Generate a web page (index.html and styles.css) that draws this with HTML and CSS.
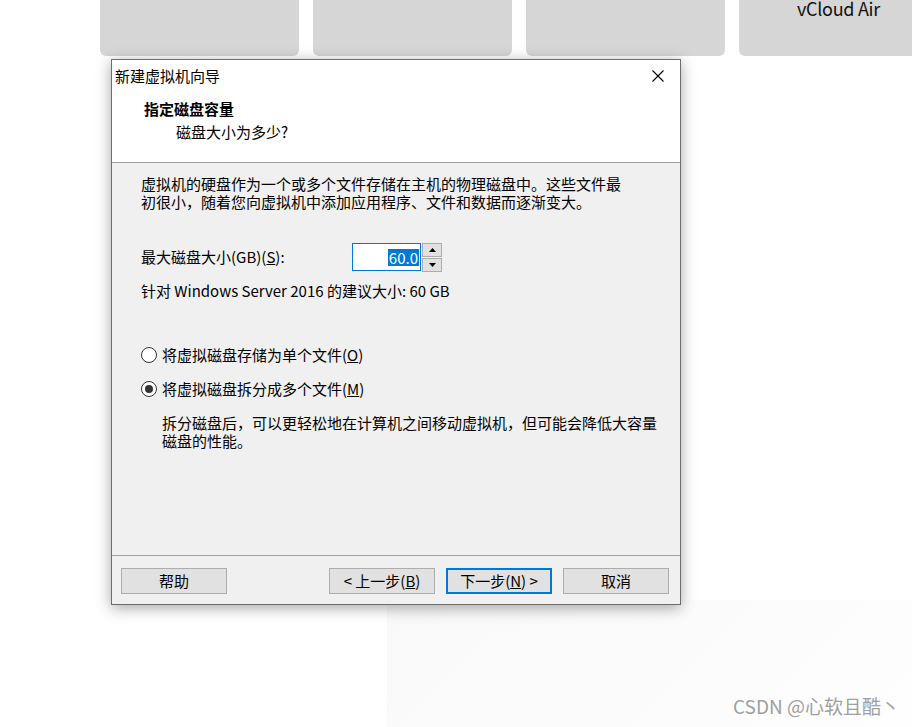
FILE: index.html
```html
<!DOCTYPE html>
<html lang="zh-CN">
<head>
    <meta charset="UTF-8">
    <meta name="viewport" content="width=device-width, initial-scale=1.0">
    <title>新建虚拟机向导</title>
    <link rel="stylesheet" href="styles.css">
</head>
<body>
    <div class="tiles">
        <div class="tile"></div>
        <div class="tile"></div>
        <div class="tile"></div>
        <div class="tile"><span class="tile-label">vCloud Air</span></div>
    </div>

    <div class="dialog">
        <div class="titlebar">
            <span class="title">新建虚拟机向导</span>
            <svg class="close" width="12" height="12" viewBox="0 0 12 12">
                <path d="M0.5 0.5 L11.5 11.5 M11.5 0.5 L0.5 11.5" stroke="#000" stroke-width="1.1" fill="none"/>
            </svg>
        </div>
        <div class="header">
            <div class="heading">指定磁盘容量</div>
            <div class="subheading">磁盘大小为多少?</div>
        </div>
        <div class="content">
            <p class="intro">虚拟机的硬盘作为一个或多个文件存储在主机的物理磁盘中。这些文件最<br>初很小，随着您向虚拟机中添加应用程序、文件和数据而逐渐变大。</p>

            <div class="size-row">
                <label class="size-label">最大磁盘大小(GB)(<u>S</u>):</label>
                <div class="spin">
                    <div class="spin-input"><span class="selected">60.0</span></div>
                    <div class="spin-buttons">
                        <div class="spin-btn">
                            <svg width="7" height="4" viewBox="0 0 7 4"><path d="M3.5 0 L7 4 L0 4 Z" fill="#000"/></svg>
                        </div>
                        <div class="spin-btn">
                            <svg width="7" height="4" viewBox="0 0 7 4"><path d="M0 0 L7 0 L3.5 4 Z" fill="#000"/></svg>
                        </div>
                    </div>
                </div>
            </div>

            <p class="hint">针对 Windows Server 2016 的建议大小: 60 GB</p>

            <div class="options">
                <label class="option"><span class="radio"></span>将虚拟磁盘存储为单个文件(<u>O</u>)</label>
                <label class="option"><span class="radio checked"></span>将虚拟磁盘拆分成多个文件(<u>M</u>)</label>
                <p class="option-desc">拆分磁盘后，可以更轻松地在计算机之间移动虚拟机，但可能会降低大容量<br>磁盘的性能。</p>
            </div>
        </div>
        <div class="footer">
            <button type="button" class="btn">帮助</button>
            <div class="nav">
                <button type="button" class="btn">&lt; 上一步(<u>B</u>)</button>
                <button type="button" class="btn default">下一步(<u>N</u>) &gt;</button>
                <button type="button" class="btn">取消</button>
            </div>
        </div>
    </div>

    <div class="watermark">CSDN @心软且酷丶</div>
</body>
</html>
```

FILE: styles.css
```css
body {
    margin: 0;
    width: 912px;
    height: 727px;
    overflow: hidden;
    position: relative;
    font-family: "Noto Sans CJK SC", "Noto Sans", sans-serif;
    font-size: 15px;
    color: #000;
    background-color: #fff;
    background-image: linear-gradient(135deg, #f9f9f9, #fcfcfc 60%, #fefefe);
    background-repeat: no-repeat;
    background-position: 387px 600px;
    background-size: 525px 127px;
}

.tiles {
    display: flex;
    gap: 14px;
    padding-left: 100px;
}

.tile {
    flex: 0 0 199px;
    height: 56px;
    background-color: #d6d6d6;
    border-radius: 0 0 6px 6px;
    text-align: center;
}

.tile-label {
    display: block;
    margin-top: -5px;
    font-size: 18px;
    letter-spacing: -0.3px;
    color: #111;
}

.dialog {
    position: absolute;
    left: 111px;
    top: 59px;
    width: 568px;
    height: 544px;
    border: 1px solid #6d6d6d;
    background-color: #f0f0f0;
    box-shadow: 0 3px 14px rgba(0, 0, 0, 0.35);
    display: flex;
    flex-direction: column;
}

.titlebar {
    height: 32px;
    background-color: #fff;
    display: flex;
    align-items: center;
    justify-content: space-between;
    padding: 0 16px 0 3px;
}

.title {
    line-height: 18px;
}

.header {
    background-color: #fff;
    height: 70px;
    border-bottom: 1px solid #a0a0a0;
    padding-left: 32px;
    line-height: 18px;
}

.heading {
    font-weight: bold;
    padding-top: 8px;
}

.subheading {
    padding-left: 32px;
    margin-top: 5px;
}

.content {
    flex: 1;
    padding: 12px 0 0 29px;
    line-height: 18px;
}

.intro {
    margin: 0;
}

.size-row {
    display: flex;
    align-items: center;
    margin-top: 32px;
    height: 28px;
}

.size-label {
    width: 211px;
}

.spin {
    display: flex;
    align-items: center;
}

.spin-input {
    width: 65px;
    height: 24px;
    border: 1px solid #0078d7;
    padding: 1px;
    background-color: #fff;
    display: flex;
    justify-content: flex-end;
    align-items: center;
}

.selected {
    background-color: #0078d7;
    color: #fff;
    line-height: 17px;
    padding: 0 1px;
}

.spin-buttons {
    display: flex;
    flex-direction: column;
    gap: 1px;
    margin-left: 1px;
}

.spin-btn {
    width: 18px;
    height: 12px;
    border: 1px solid #adadad;
    background-color: #e1e1e1;
    display: flex;
    align-items: center;
    justify-content: center;
}

.hint {
    margin: 11px 0 0;
}

.options {
    margin-top: 46px;
}

.option {
    display: flex;
    align-items: center;
    height: 18px;
    margin-bottom: 16px;
}

.radio {
    width: 14px;
    height: 14px;
    border: 1px solid #333;
    border-radius: 50%;
    background-color: #fff;
    margin-right: 5px;
    position: relative;
    flex: none;
}

.radio.checked::after {
    content: "";
    position: absolute;
    left: 3px;
    top: 3px;
    width: 8px;
    height: 8px;
    border-radius: 50%;
    background-color: #333;
}

.option-desc {
    margin: 12px 0 0 21px;
}

.footer {
    height: 49px;
    border-top: 1px solid #a0a0a0;
    display: flex;
    justify-content: space-between;
    align-items: flex-start;
    padding: 12px 11px 0 9px;
    box-sizing: border-box;
}

.nav {
    display: flex;
    gap: 11px;
}

.btn {
    width: 106px;
    height: 26px;
    border: 1px solid #adadad;
    background-color: #e1e1e1;
    font-family: inherit;
    font-size: 15px;
    color: #000;
    padding: 0;
    line-height: 22px;
}

.btn.default {
    border: 2px solid #0078d7;
}

.watermark {
    position: absolute;
    right: 12px;
    bottom: 8px;
    font-size: 19px;
    color: #a0a0a0;
    text-shadow: 1px 1px 0 #fff;
}
```
